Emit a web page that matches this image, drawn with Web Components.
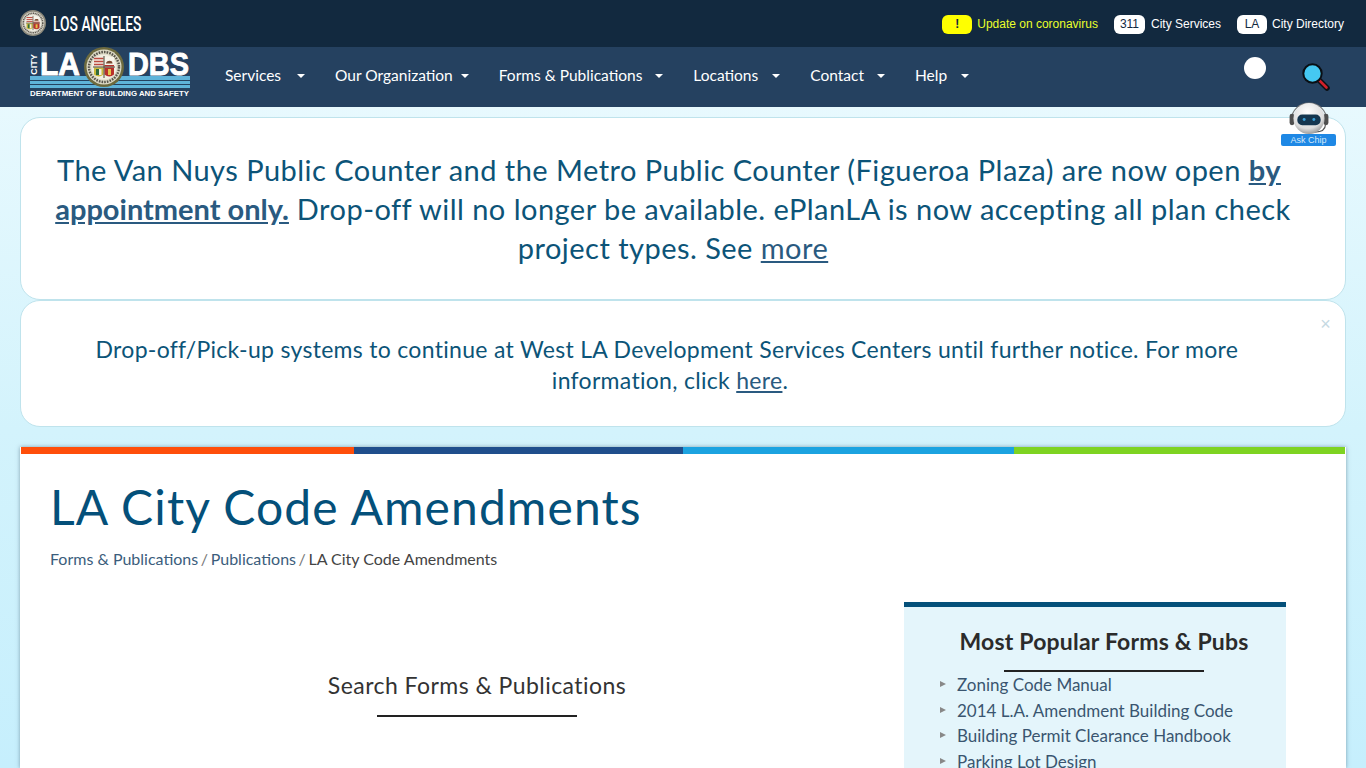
<!DOCTYPE html>
<html>
<head>
<meta charset="utf-8">
<title>LA City Code Amendments</title>
<style>
    html, body { margin: 0; padding: 0; height: 768px; overflow: hidden; }
    body { background: linear-gradient(180deg, #e8f9fe 100px, #d3f3fc 430px, #c6effd 768px); font-family: Lato, sans-serif; }
</style>
</head>
<body>
<top-bar></top-bar>
<main-nav></main-nav>
<chip-badge></chip-badge>
<page-alerts>
    <alert-box size="big">The Van Nuys Public Counter and the Metro Public Counter (Figueroa Plaza) are now open <a href="#"><b>by</b></a>&nbsp; <a href="#"><b style="letter-spacing:0">appointment only.</b></a> Drop-off will no longer be available. ePlanLA is now accepting all plan check project types. See <a href="#">more</a></alert-box>
    <alert-box size="small" closable>Drop-off/Pick-up systems to continue at West LA Development Services Centers until further notice. For more&nbsp; information, click <a href="#">here</a>.</alert-box>
</page-alerts>
<content-card></content-card>

<script>
// city seal, drawn around a 40x40 box
const SEAL = (ring, inner) => `
    <circle cx="20" cy="20" r="20" fill="${ring}"/>
    <circle cx="20" cy="20" r="17.5" fill="${inner}"/>
    <circle cx="20" cy="20" r="15" fill="none" stroke="#57534a" stroke-width="2.4" stroke-dasharray="1.6 1.1"/>
    <circle cx="20" cy="20" r="12.6" fill="#f1eee2"/>
    <path d="M10 10h9.5v9.5h-9.5z" fill="#f3ece3"/>
    <path d="M10 11.5h9.5M10 14.5h9.5M10 17.5h9.5" stroke="#bb4a3e" stroke-width="1.5"/>
    <path d="M20.5 10h9.5v9.5h-9.5z" fill="#f7f4ea"/>
    <path d="M22 16c1-2.6 4-2.8 6-1.6l.6 2.2h-6.6z" fill="#7a4a30"/>
    <path d="M20.5 18h9.5v1.5h-9.5z" fill="#b8302a"/>
    <path d="M10 20.5h9.5v7c-3 2.600-6.500 2.600-9.500 0z" fill="#c9b93a"/>
    <path d="M12 22h3v6h-3z" fill="#2f6b3a"/>
    <path d="M15 22h2.500v6h-2.500z" fill="#f3ece3"/>
    <path d="M20.500 20.500h9.500v7c-3 2.600-6.500 2.600-9.500 0z" fill="#b8302a"/>
    <path d="M24 22h3v6h-3z" fill="#e3c24a"/>
    <path d="M20 9v22M9 20h22" stroke="#4a4636" stroke-width="1"/>`;

class TopBar extends HTMLElement {
    constructor() {
        super();
        this.attachShadow({ mode: 'open' }).innerHTML = `
            <style>
                :host { display: flex; align-items: center; box-sizing: border-box; height: 47px; background: #12293f; padding: 1px 22px 0 20px; color: #fff; font: 12px "Liberation Sans", sans-serif; }
                .city { display: flex; align-items: center; gap: 7px; font: 500 21px Roboto, sans-serif; width: 130px; white-space: nowrap; }
                .city span { display: inline-block; transform: scaleX(.66); transform-origin: left; }
                svg { width: 26px; height: 26px; flex: none; margin-top: -2px; }
                .links { margin-left: auto; display: flex; align-items: center; gap: 16px; }
                .link { display: flex; align-items: center; gap: 6px; }
                .tag { background: #fff; color: #12293f; border-radius: 6px; height: 19px; line-height: 19px; width: 31px; text-align: center; }
                .warn { background: #ffff00; width: 30px; font-weight: bold; }
                .la { width: 30px; }
                .tight { gap: 5px; }
                .yellow { color: #eaff2a; }
            </style>
            <div class="city">
                <svg viewBox="0 0 40 40">${SEAL('#8d8a7c', '#d8d5c9')}</svg>
                <span>LOS ANGELES</span>
            </div>
            <div class="links">
                <div class="link tight"><div class="tag warn">!</div><span class="yellow">Update on coronavirus</span></div>
                <div class="link"><div class="tag">311</div><span>City Services</span></div>
                <div class="link tight"><div class="tag la">LA</div><span>City Directory</span></div>
            </div>
        `;
    }
}

class MainNav extends HTMLElement {
    constructor() {
        super();
        const items = [['Services', 16], ['Our Organization', 8], ['Forms & Publications', 13], ['Locations', 14], ['Contact', 13], ['Help', 14]];
        this.attachShadow({ mode: 'open' }).innerHTML = `
            <style>
                :host { display: flex; align-items: center; height: 60px; background: #254160; padding-left: 30px; color: #fff; font: 15.5px Lato, sans-serif; }
                .logo { width: 160px; height: 60px; display: block; flex: none; overflow: visible; }
                ul { display: flex; list-style: none; margin: 0 0 0 35px; padding: 0 0 4px; gap: 30px; }
                li { display: flex; align-items: center; }
                li::after { content: ""; border: 4px solid transparent; border-top-color: #fff; border-bottom: 0; margin-top: 2px; margin-left: var(--gap); }
                .tools { margin-left: auto; display: flex; align-items: center; gap: 35px; padding-right: 35px; }
                .dot { width: 22px; height: 22px; border-radius: 50%; background: #fff; margin-top: -18px; }
                .glass { width: 30px; height: 30px; display: block; }
            </style>
            <svg class="logo" viewBox="0 0 160 60">
                <rect x="0" y="29" width="160" height="4" fill="#5fb3d9"/>
                <rect x="0" y="34" width="160" height="3" fill="#5fb3d9"/>
                <rect x="0" y="38" width="160" height="3" fill="#5fb3d9"/>
                <text x="7" y="28" transform="rotate(-90 7 28)" font-family="Liberation Sans" font-weight="bold" font-size="9" fill="#fff" textLength="21" lengthAdjust="spacingAndGlyphs">CITY</text>
                <text x="10" y="28" font-family="Liberation Sans" font-weight="bold" font-size="31" fill="#fff" stroke="#fff" stroke-width=".9" textLength="40" lengthAdjust="spacingAndGlyphs">LA</text>
                <text x="98" y="28" font-family="Liberation Sans" font-weight="bold" font-size="31" fill="#fff" stroke="#fff" stroke-width=".9" textLength="61" lengthAdjust="spacingAndGlyphs">DBS</text>
                <g transform="translate(54 0)">${SEAL('#6d6a3e', '#dcd9c5')}</g>
                <text x="0" y="49" font-family="Liberation Sans" font-weight="bold" font-size="8" fill="#fff" textLength="159" lengthAdjust="spacingAndGlyphs">DEPARTMENT OF BUILDING AND SAFETY</text>
            </svg>
            <ul>${items.map(([t, g]) => `<li style="--gap:${g}px">${t.replace('&', '&amp;')}</li>`).join('')}</ul>
            <div class="tools">
                <div class="dot"></div>
                <svg class="glass" viewBox="0 0 30 30">
                    <path d="M17 17l9 9" stroke="#0a0f14" stroke-width="5.500" stroke-linecap="round"/>
                    <path d="M18 18l7.500 7.500" stroke="#d0202a" stroke-width="2.600" stroke-linecap="round"/>
                    <circle cx="11.500" cy="11.500" r="9.200" fill="#45c8f2" stroke="#0a0f14" stroke-width="2"/>
                </svg>
            </div>
        `;
    }
}

class ChipBadge extends HTMLElement {
    constructor() {
        super();
        this.attachShadow({ mode: 'open' }).innerHTML = `
            <style>
                :host { position: absolute; left: 1281px; top: 101px; width: 55px; height: 45px; z-index: 5; display: block; }
                svg { display: block; margin: 1px auto 0; width: 42px; height: 33px; }
                div { position: absolute; left: 0; top: 33px; width: 55px; height: 12px; background: #1e88e5; border-radius: 2px; color: #d6e8fa; font: 9px/12px "Liberation Sans", sans-serif; text-align: center; }
            </style>
            <svg viewBox="0 0 42 34">
                <defs>
                    <radialGradient id="head" cx=".45" cy=".3" r=".75">
                        <stop offset="0" stop-color="#ffffff"/>
                        <stop offset=".7" stop-color="#dddddd"/>
                        <stop offset="1" stop-color="#8a8a8a"/>
                    </radialGradient>
                </defs>
                <path d="M3 18a18 17 0 0 1 36 0" fill="none" stroke="#777" stroke-width="1.200"/>
                <rect x="1" y="12" width="5" height="12" rx="2.500" fill="#4f4f4f"/>
                <rect x="36" y="12" width="5" height="12" rx="2.500" fill="#4f4f4f"/>
                <path d="M38 23c0 6-5 8-11 8" fill="none" stroke="#555" stroke-width="1.200"/>
                <ellipse cx="21" cy="17" rx="16" ry="16" fill="url(#head)"/>
                <rect x="9" y="13" width="24" height="11" rx="5" fill="#15364f"/>
                <circle cx="16" cy="18" r="1.500" fill="#3aa0d8"/>
                <circle cx="26" cy="18" r="1.500" fill="#3aa0d8"/>
            </svg>
            <div>Ask Chip</div>
        `;
    }
}

class PageAlerts extends HTMLElement {
    constructor() {
        super();
        this.attachShadow({ mode: 'open' }).innerHTML = `
            <style>
                :host { display: block; padding: 10px 20px 20px; }
            </style>
            <slot></slot>
        `;
    }
}

class AlertBox extends HTMLElement {
    constructor() {
        super();
        const root = this.attachShadow({ mode: 'open' });
        root.innerHTML = `
            <style>
                :host { display: block; box-sizing: border-box; background: #fff; border: 1px solid #bfe3ec; border-radius: 20px; color: #0c5478; text-align: center; position: relative; font-family: Lato, sans-serif; }
                :host([size="big"]) { height: 183px; padding: 32px 44px 0 24px; font-size: 29px; letter-spacing: .47px; line-height: 39px; }
                :host([size="small"]) { height: 127px; padding: 33px 96px 0 70px; font-size: 23px; letter-spacing: .3px; line-height: 31px; }
                .close { position: absolute; right: 14px; top: 13px; color: #c5d9e2; font: 18px "Liberation Sans", sans-serif; }
                ::slotted(a) { color: #2a5a80; }
            </style>
            <slot></slot>
            ${this.hasAttribute('closable') ? '<span class="close">×</span>' : ''}
        `;
    }
}

class ContentCard extends HTMLElement {
    constructor() {
        super();
        this.attachShadow({ mode: 'open' }).innerHTML = `
            <style>
                :host { display: block; margin: 0 20px; background: #fff; box-shadow: 0 0 4px rgba(60,90,110,.55); height: 321px; overflow: hidden; color: #333; font-family: Lato, sans-serif; }
                .strip { display: flex; height: 7px; margin: 0 1px; }
                .strip i { display: block; }
                h1 { margin: 0; padding: 24px 0 0 30px; font-size: 48px; letter-spacing: 1.1px; line-height: 58px; font-weight: 400; color: #04507a; }
                .crumbs { padding: 13px 0 0 30px; font-size: 16px; line-height: 20px; color: #444; }
                .crumbs a { color: #3b5d7c; }
                .crumbs s { text-decoration: none; color: #777; margin: 0 -1.500px; }
                .cols { display: flex; padding-top: 33px; }
                .left { width: 884px; flex: none; padding: 69px 0 0 30px; box-sizing: border-box; text-align: center; }
                h2 { margin: 0; font-size: 23px; letter-spacing: .45px; line-height: 28px; font-weight: 400; color: #333; }
                .rule { width: 200px; height: 2px; background: #222; margin: 15px auto 0; }
                .left .rule { margin-top: 16px; }
                .side { width: 382px; height: 400px; box-sizing: border-box; background: #e4f5fb; border-top: 5px solid #04507a; }
                .head { padding-left: 18px; }
                h3 { margin: 0; padding-top: 20px; text-align: center; font-size: 23px; letter-spacing: .2px; line-height: 28px; font-weight: 700; color: #2b2b2b; }
                ul { list-style: none; margin: 0; padding: 0 0 0 36px; font-size: 17px; line-height: 25.500px; color: #3a5570; }
                li { position: relative; padding-left: 17px; }
                li::before { content: ""; position: absolute; left: 0; top: 9px; border: 3.500px solid transparent; border-left: 6px solid #888; border-right: 0; }
            </style>
            <div class="strip">
                <i style="width:333px;background:#ff4e0a"></i>
                <i style="width:329px;background:#1f4e8c"></i>
                <i style="width:331px;background:#1ca3e0"></i>
                <i style="flex:1;background:#7ed321"></i>
            </div>
            <h1>LA City Code Amendments</h1>
            <div class="crumbs"><a>Forms &amp; Publications</a> <s>/</s> <a>Publications</a> <s>/</s> LA City Code Amendments</div>
            <div class="cols">
                <div class="left">
                    <h2>Search Forms &amp; Publications</h2>
                    <div class="rule"></div>
                </div>
                <div class="side">
                    <div class="head">
                        <h3>Most Popular Forms &amp; Pubs</h3>
                        <div class="rule"></div>
                    </div>
                    <ul>
                        <li>Zoning Code Manual</li>
                        <li>2014 L.A. Amendment Building Code</li>
                        <li>Building Permit Clearance Handbook</li>
                        <li>Parking Lot Design</li>
                    </ul>
                </div>
            </div>
        `;
    }
}

customElements.define('top-bar', TopBar);
customElements.define('main-nav', MainNav);
customElements.define('chip-badge', ChipBadge);
customElements.define('page-alerts', PageAlerts);
customElements.define('alert-box', AlertBox);
customElements.define('content-card', ContentCard);
</script>
</body>
</html>
